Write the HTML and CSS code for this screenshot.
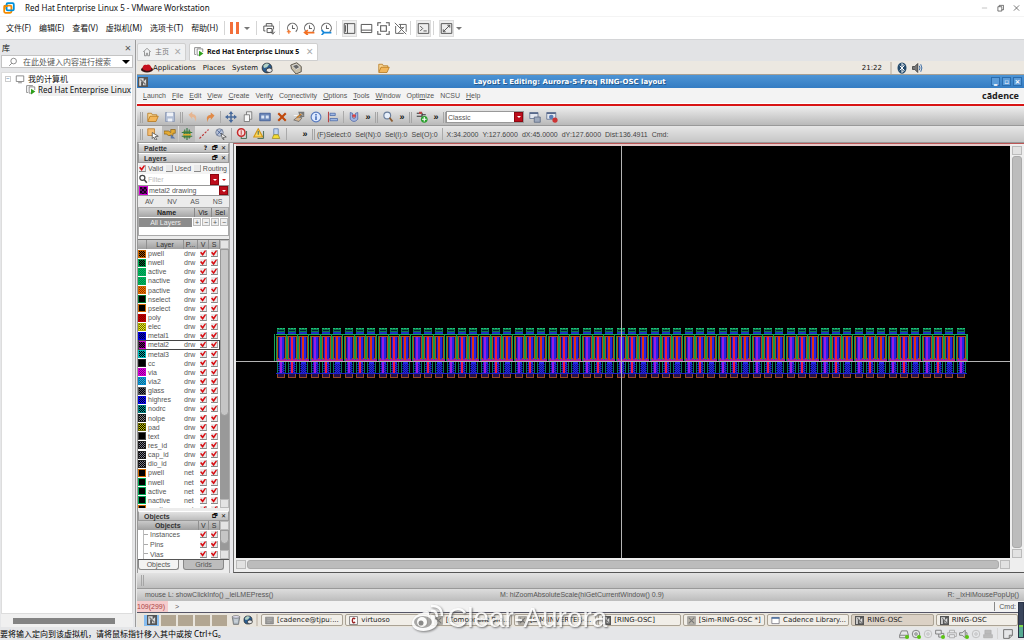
FILE: index.html
```html
<!DOCTYPE html>
<html lang="zh-CN">
<head>
<meta charset="utf-8">
<title>Red Hat Enterprise Linux 5 - VMware Workstation</title>
<link rel="stylesheet" href="styles.css">
</head>
<body>
<svg class="sprite" aria-hidden="true">
  <symbol id="i-home" viewBox="0 0 16 16"><path d="M2 8l6-6 6 6M4 7v7h3v-4h2v4h3V7" fill="none" stroke="#777" stroke-width="1.2"/></symbol>
  <symbol id="i-vm" viewBox="0 0 16 16"><path d="M10 13H5V3h9v5M3 12H1V1h10" fill="none" stroke="#777" stroke-width="1.3"/><path d="M8 6l7 4.500-7 4.500z" fill="#2fa01c"/></symbol>
  <symbol id="i-pc" viewBox="0 0 16 16"><path d="M2 3h12v9H2zM5 14h6" fill="none" stroke="#777" stroke-width="1.300"/></symbol>
  <symbol id="i-search" viewBox="0 0 16 16"><circle cx="9" cy="6.500" r="4.500" fill="none" stroke="#777" stroke-width="1.300"/><path d="M6 10l-4 4" stroke="#777" stroke-width="1.400"/></symbol>
  <symbol id="i-send" viewBox="0 0 16 16"><path d="M4 5V2h7v3M3 11H1V5h12v4M5 8h6v5H5zM12 9v5M9.500 12l2.500 3 2.500-3" fill="none" stroke="#555" stroke-width="1.200"/></symbol>
  <symbol id="i-clock" viewBox="0 0 16 16"><path d="M3 11a6 6 0 1 1 9 1M8 4v4h3" fill="none" stroke="#666" stroke-width="1.300"/></symbol>
  <symbol id="i-panel" viewBox="0 0 16 16"><path d="M1.500 2h13v12h-13zM5.500 2v12M3 4v8" fill="none" stroke="#555" stroke-width="1.200"/></symbol>
  <symbol id="i-bottom" viewBox="0 0 16 16"><path d="M1.500 3h13v10h-13zM1.500 10h13" fill="none" stroke="#555" stroke-width="1.200"/></symbol>
  <symbol id="i-full" viewBox="0 0 16 16"><path d="M1 5V1h4M11 1h4v4M15 11v4h-4M5 15H1v-4M4.500 4.500h7v7h-7z" fill="none" stroke="#555" stroke-width="1.300"/></symbol>
  <symbol id="i-unity" viewBox="0 0 16 16"><path d="M6 3h9v9M12 14H2V5M5 14l7-8M1 1l14 14M8 3v4h4" fill="none" stroke="#666" stroke-width="1.200"/></symbol>
  <symbol id="i-console" viewBox="0 0 16 16"><path d="M1.500 2h13v12h-13zM4 5l3 3-3 3M8 11h4" fill="none" stroke="#555" stroke-width="1.200"/></symbol>
  <symbol id="i-expand" viewBox="0 0 16 16"><path d="M1.500 2h13v12h-13zM4 12l8-8M9 4h3v3M4 9v3h3" fill="none" stroke="#555" stroke-width="1.200"/></symbol>
  <symbol id="i-hat" viewBox="0 0 16 16"><ellipse cx="8" cy="10" rx="8" ry="4" fill="#3b1414"/><path d="M2 9c0-5 3-6 5-5 3-2 7 0 7 6-4 3-9 2-12-1z" fill="#c6101c"/></symbol>
  <symbol id="i-globe" viewBox="0 0 16 16"><circle cx="8" cy="8" r="6.500" fill="#2b5d8f" stroke="#222"/><path d="M3 5c3-4 6-3 8-2l-3 4-4 1z" fill="#b4d3c6"/><ellipse cx="11" cy="11" rx="4" ry="3" fill="#e8e8e8" stroke="#222"/></symbol>
  <symbol id="i-mail" viewBox="0 0 16 16"><path d="M1 4l8-3 6 5v7l-7 3-6-7z" fill="#c9c0aa" stroke="#38342c"/><path d="M3 5l6-2 4 4-5 3z" fill="#666" stroke="#eee"/></symbol>
  <symbol id="i-folder" viewBox="0 0 16 16"><path d="M1 13V3h5l1 2h6v3" fill="#f7d492" stroke="#b37418"/><path d="M1 14l3-7h11l-3 7z" fill="#f3b65a" stroke="#b37418"/></symbol>
  <symbol id="i-bt" viewBox="0 0 16 16"><ellipse cx="8" cy="8" rx="6" ry="7.500" fill="#234a6c"/><path d="M5 5l6 6-3 3V2l3 3-6 6" fill="none" stroke="#fff" stroke-width="1.300"/></symbol>
  <symbol id="i-sound" viewBox="0 0 16 16"><path d="M2 6h3l4-4v12l-4-4H2z" fill="#777" stroke="#333"/><path d="M11 5q2 3 0 6M13 3q3 5 0 10" fill="none" stroke="#386aa5" stroke-width="1.300"/></symbol>
  <symbol id="i-app" viewBox="0 0 16 16"><path fill="#555" d="M0 0h16v16H0z"/><path d="M2 2h7v5H5v7H2zM8 13V8l5-5v10z" fill="#ddd"/><path d="M4 4l8 8" stroke="#777" stroke-width="2"/></symbol>
  <symbol id="i-save" viewBox="0 0 16 16"><path d="M2 2h12v12H2z" fill="#b1bdd4" stroke="#8794b0"/><path d="M4 2h8v5H4zM5 10h6v4H5z" fill="#eef1f7"/></symbol>
  <symbol id="i-undo" viewBox="0 0 16 16"><path d="M2 5l5-4v3q8 1 4 10 0-6-4-6v3z" fill="#e6b692"/></symbol>
  <symbol id="i-redo" viewBox="0 0 16 16"><path d="M14 6L9 2v3q-8 1-4 10 0-6 4-6v3z" fill="#e08a48"/></symbol>
  <symbol id="i-move" viewBox="0 0 16 16"><path d="M8 0l3 4H9v3h3V5l4 3-4 3V9H9v3h2l-3 4-3-4h2V9H4v2L0 8l4-3v2h3V4H5z" fill="#47699b"/></symbol>
  <symbol id="i-copy" viewBox="0 0 16 16"><path d="M6 1h7v10H6z" fill="#eee" stroke="#666"/><path d="M3 5h7v9H3z" fill="#f8f8f8" stroke="#666"/></symbol>
  <symbol id="i-stretch" viewBox="0 0 16 16"><path d="M1 3h14v10H1z" fill="#6c87b8" stroke="#365490"/><path d="M3 6h4v4H3zM9 6h4v4H9z" fill="#dbe5f5"/></symbol>
  <symbol id="i-del" viewBox="0 0 16 16"><path d="M2 4l2-2 4 4 4-4 2 2-4 4 4 4-2 2-4-4-4 4-2-2 4-4z" fill="#c0480b"/></symbol>
  <symbol id="i-prop" viewBox="0 0 16 16"><path d="M1 12l5-4 6 1-4 5z" fill="#d8b691" stroke="#666"/><path d="M7 1h8v7H9z" fill="#777"/><path d="M10 3l3 3M1 6h5" stroke="#fff"/><path d="M5 9l6-5" stroke="#c87b24" stroke-width="2"/></symbol>
  <symbol id="i-info" viewBox="0 0 16 16"><circle cx="8" cy="8" r="6.500" fill="#dce8ff" stroke="#5679bd" stroke-width="1.500"/><path d="M8 7v5M8 4v2" stroke="#3e67b5" stroke-width="2"/></symbol>
  <symbol id="i-align" viewBox="0 0 16 16"><path d="M2 1v14" stroke="#b44" stroke-width="1.500"/><path d="M4 3h7v3H4zM4 10h10v3H4z" fill="#9fb7e3" stroke="#496aa8"/></symbol>
  <symbol id="i-magnet" viewBox="0 0 16 16"><path d="M3 2l3 1v6q2 2 4 0V3l3-1v9q-5 6-10 0z" fill="#a3b4df" stroke="#4c65a7"/><path d="M8 4v5M5.500 6.500h5" stroke="#d33" stroke-width="1.500"/></symbol>
  <symbol id="i-zoom" viewBox="0 0 16 16"><circle cx="7" cy="6" r="4.500" fill="#e8f0fb" stroke="#6a7f9d" stroke-width="1.500"/><path d="M10 9l4 5" stroke="#8c5c30" stroke-width="2.500"/></symbol>
  <symbol id="i-net" viewBox="0 0 16 16"><path d="M1 3h7v4H1M8 5h5" fill="none" stroke="#333" stroke-width="1.500"/><path d="M4 1h4v3H4z" fill="#b44"/><circle cx="11" cy="11" r="4.500" fill="#2aa02d"/><path d="M11 8v6M8 11h6" stroke="#fff" stroke-width="1.500"/></symbol>
  <symbol id="i-win" viewBox="0 0 16 16"><path d="M1 2h11v8H1z" fill="#e3e7ef" stroke="#58698b"/><path d="M1 3h11" stroke="#58698b" stroke-width="2"/><path d="M7 8h8v7H7z" fill="#9da9bd" stroke="#56647e"/></symbol>
  <symbol id="i-winred" viewBox="0 0 16 16"><path d="M1 2h12v9H1z" fill="#e3e7ef" stroke="#58698b"/><path d="M1 3h12" stroke="#58698b" stroke-width="2"/><circle cx="7" cy="8" r="3" fill="#5b7db5"/><circle cx="12" cy="12" r="3.500" fill="#c33"/></symbol>
  <symbol id="i-pick" viewBox="0 0 16 16"><path d="M1 1h9v9H1z" fill="#f4bd72" stroke="#bb7928"/><path d="M7 6l8 5-4 .5 2 4-2 .5-2-4-2 2z" fill="#fff" stroke="#444"/></symbol>
  <symbol id="i-hand" viewBox="0 0 16 16"><path d="M0 4h6l3 2V2h6v5h-3v3H6L3 8H0z" fill="#e4ab35" stroke="#8a641f"/><path d="M9 8l6 6H9z" fill="#5d78a8"/></symbol>
  <symbol id="i-cross" viewBox="0 0 16 16"><path d="M3 4h10v9H3z" fill="#89a449"/><path d="M1 6h14M1 11h14M8 0v16M5 2v12M11 2v12" stroke="#397a49" stroke-width="1.600"/><path d="M3 9h10" stroke="#e2ae2f" stroke-width="2"/></symbol>
  <symbol id="i-line" viewBox="0 0 16 16"><path d="M2 14L14 2" stroke="#b33" stroke-width="1.500" stroke-dasharray="3 2"/></symbol>
  <symbol id="i-poly" viewBox="0 0 16 16"><circle cx="6" cy="6" r="5" fill="#b7c2d8" stroke="#67738b"/><path d="M3 3l7 7M9 2L3 9" stroke="#3c568b"/><path d="M8 7l7 5-4 .5 1 3-2-1z" fill="#fff" stroke="#444"/></symbol>
  <symbol id="i-stop" viewBox="0 0 16 16"><circle cx="7" cy="6" r="5" fill="#f6dada" stroke="#c52929" stroke-width="2"/><path d="M7 3v6" stroke="#c55" stroke-width="1.500"/><path d="M7 12v2h7M14 4v10" fill="none" stroke="#54745e" stroke-width="1.500"/></symbol>
  <symbol id="i-warn" viewBox="0 0 16 16"><path d="M7 1l6 11H1z" fill="#fbd759" stroke="#d19516" stroke-width="1.500"/><path d="M7 4v5M6 14h8M14 4v10" fill="none" stroke="#54745e" stroke-width="1.500"/></symbol>
  <symbol id="i-lamp" viewBox="0 0 16 16"><path d="M5 1h6v8H5z" fill="#c1d3ed" stroke="#5678ac"/><path d="M5 9h6l2 5H3z" fill="#f4dc34" stroke="#9c8c27"/></symbol>
  <symbol id="i-term" viewBox="0 0 16 16"><path d="M1 2h14v12H1z" fill="#999" stroke="#777"/><path d="M4 5h8M4 8h8M4 11h5" stroke="#bbb"/></symbol>
  <symbol id="i-wnd" viewBox="0 0 16 16"><path d="M1.500 2.500h13v11h-13z" fill="#fff" stroke="#445"/><path d="M1 3.500h14" stroke="#456a9d" stroke-width="3"/></symbol>
  <symbol id="i-c" viewBox="0 0 16 16"><path d="M1 1h14v14H1z" fill="#fff" stroke="#333"/><path d="M11 5q-5-3-5 3t5 3" fill="none" stroke="#922" stroke-width="2.500"/></symbol>
  <symbol id="i-x" viewBox="0 0 16 16"><path d="M1 1h14v14H1z" fill="#b9b4aa" stroke="#888"/><path d="M3 3l10 10M13 3L3 13" stroke="#777" stroke-width="2"/></symbol>
  <symbol id="i-trash" viewBox="0 0 16 16"><path d="M2 3h12l-2 12H4z" fill="#aab6c0" stroke="#555"/><ellipse cx="8" cy="3" rx="6" ry="2" fill="#eef" stroke="#555"/><path d="M5 8h6M5 11h6" stroke="#fff"/></symbol>
  <symbol id="i-disk" viewBox="0 0 16 16"><path d="M1 10l3-7h9l2 7v4H1zM1 10h14" fill="none" stroke="#777" stroke-width="1.400"/></symbol>
  <symbol id="i-cd" viewBox="0 0 16 16"><circle cx="8" cy="8" r="6" fill="none" stroke="currentColor" stroke-width="1.400"/><circle cx="8" cy="8" r="2" fill="none" stroke="currentColor" stroke-width="1.400"/></symbol>
  <symbol id="i-lan" viewBox="0 0 16 16"><path d="M1 2h9v6H1zM6 8v5h8V7h-4" fill="none" stroke="#777" stroke-width="1.400"/></symbol>
  <symbol id="i-print" viewBox="0 0 16 16"><path d="M4 6V2h8v4M4 12H1V6h14v6h-3M4 9h8v5H4z" fill="none" stroke="#aaa" stroke-width="1.400"/></symbol>
  <symbol id="i-spk" viewBox="0 0 16 16"><path d="M1 6h4l5-4v12l-5-4H1zM12 5q2 3 0 6" fill="none" stroke="#777" stroke-width="1.400"/></symbol>
  <symbol id="i-ser" viewBox="0 0 16 16"><path d="M3 2h10v6H3zM1 9h14v5H1z" fill="#bbb" stroke="#aaa"/></symbol>
  <symbol id="i-note" viewBox="0 0 16 16"><path d="M1 1h14v9l-5 5H1zM15 10h-5v5" fill="none" stroke="#666" stroke-width="1.400"/></symbol>
</svg>

<div class="host">
  <header class="titlebar">
    <svg class="logo" viewBox="0 0 20 20"><rect x="2" y="6" width="12" height="12" rx="2" fill="none" stroke="#f38b00" stroke-width="3"/><rect x="6" y="2" width="12" height="12" rx="2" fill="none" stroke="#0091da" stroke-width="3"/><path d="M3 12V7h5" fill="none" stroke="#f38b00" stroke-width="3"/></svg>
    <span class="grow">Red Hat Enterprise Linux 5 - VMware Workstation</span>
    <button class="winbtn dim" aria-label="最小化"><svg viewBox="0 0 8 8"><path d="M1 4h6" stroke="#bbb"/></svg></button>
    <button class="winbtn" aria-label="还原"><svg viewBox="0 0 8 8"><path d="M1 2.500h4.500v5H1zM2.500 2.500V1h5v5H5.500" fill="none" stroke="#444" stroke-width=".8"/></svg></button>
    <button class="winbtn" aria-label="关闭"><svg viewBox="0 0 8 8"><path d="M1 1l6 6M7 1L1 7" stroke="#444" stroke-width=".8"/></svg></button>
  </header>
  <nav class="hostmenu">
    <button>文件(F)</button><button>编辑(E)</button><button>查看(V)</button><button>虚拟机(M)</button><button>选项卡(T)</button><button>帮助(H)</button>
    <i class="vsep"></i>
    <button class="pause" aria-label="暂停"><i></i><i></i></button><span class="caret"></span>
    <i class="vsep"></i>
    <button class="tool" aria-label="发送"><svg><use href="#i-send"/></svg></button>
    <i class="vsep"></i>
    <button class="tool" aria-label="快照"><svg viewBox="0 0 16 16"><use href="#i-clock"/><path d="M1 12h5M3.500 9.500v5" stroke="#f36f21" stroke-width="1.500"/></svg></button>
    <button class="tool" aria-label="恢复"><svg viewBox="0 0 16 16"><use href="#i-clock"/><path d="M14 13H3M6 10l-4 3 4 3" stroke="#f36f21" stroke-width="2" fill="none"/></svg></button>
    <button class="tool" aria-label="管理"><svg viewBox="0 0 16 16"><use href="#i-clock"/><path d="M14 13H3M2 10l3 3-3 3" stroke="#1687d9" stroke-width="2" fill="none"/></svg></button>
    <i class="vsep"></i>
    <button class="tool on" aria-label="库"><svg><use href="#i-panel"/></svg></button>
    <button class="tool" aria-label="缩略图"><svg><use href="#i-bottom"/></svg></button>
    <button class="tool" aria-label="全屏"><svg><use href="#i-full"/></svg></button>
    <button class="tool" aria-label="Unity"><svg><use href="#i-unity"/></svg></button>
    <i class="vsep"></i>
    <button class="tool on" aria-label="控制台"><svg><use href="#i-console"/></svg></button>
    <i class="vsep"></i>
    <button class="tool on" aria-label="拉伸"><svg><use href="#i-expand"/></svg></button><span class="caret last"></span>
  </nav>

  <div class="body">
    <aside class="library">
      <div class="libhead"><span class="grow">库</span><button class="close" aria-label="关闭库">×</button></div>
      <div class="libsearch"><svg class="s10"><use href="#i-search"/></svg><input aria-label="搜索" placeholder="在此处键入内容进行搜索"><span class="bigcaret"></span></div>
      <div class="tree">
        <div class="node"><span class="minus">−</span><svg class="s10"><use href="#i-pc"/></svg>我的计算机</div>
        <div class="node child"><svg class="s10"><use href="#i-vm"/></svg><span>Red Hat Enterprise Linux</span></div>
      </div>
      <div class="libscroll"><i></i></div>
    </aside>

    <main class="vm">
      <div class="tabs">
        <button class="tab"><svg class="s10"><use href="#i-home"/></svg><span>主页</span><b>×</b></button>
        <button class="tab active"><svg class="s10"><use href="#i-vm"/></svg><strong>Red Hat Enterprise Linux 5</strong><b>×</b></button>
      </div>
      <div class="gnome">
        <svg class="s12"><use href="#i-hat"/></svg>
        <button>Applications</button><button>Places</button><button>System</button>
        <svg class="s12"><use href="#i-globe"/></svg>
        <svg class="s12 mail"><use href="#i-mail"/></svg>
        <svg class="s12 fold"><use href="#i-folder"/></svg>
        <span class="grow"></span>
        <span class="time">21:22</span><i class="gsep"></i>
        <svg class="s12"><use href="#i-bt"/></svg><svg class="s12"><use href="#i-sound"/></svg>
      </div>
      <div class="cadtitle">
        <svg class="s10"><use href="#i-app"/></svg>
        <span class="grow">Layout L Editing: Aurora-5-Freq RING-OSC layout</span>
        <button aria-label="Minimize">‗</button><button aria-label="Maximize">▫</button><button aria-label="Close">×</button>
      </div>
      <nav class="cadmenu">
        <button><u>L</u>aunch</button><button><u>F</u>ile</button><button><u>E</u>dit</button><button><u>V</u>iew</button><button><u>C</u>reate</button><button>Verif<u>y</u></button><button>Co<u>n</u>nectivity</button><button><u>O</u>ptions</button><button><u>T</u>ools</button><button><u>W</u>indow</button><button>Opti<u>m</u>ize</button><button>NCSU</button><button><u>H</u>elp</button>
        <span class="brand">cādence</span>
      </nav>
      <div class="bar bar1">
        <i class="grip"></i>
        <button class="ic" aria-label="Open"><svg><use href="#i-folder"/></svg></button>
        <button class="ic" aria-label="Save"><svg><use href="#i-save"/></svg></button>
        <i class="grip"></i>
        <button class="ic" aria-label="Undo"><svg><use href="#i-undo"/></svg></button>
        <button class="ic" aria-label="Redo"><svg><use href="#i-redo"/></svg></button>
        <i class="thin"></i>
        <button class="ic" aria-label="Move"><svg><use href="#i-move"/></svg></button>
        <button class="ic" aria-label="Copy"><svg><use href="#i-copy"/></svg></button>
        <button class="ic" aria-label="Stretch"><svg><use href="#i-stretch"/></svg></button>
        <button class="ic" aria-label="Delete"><svg><use href="#i-del"/></svg></button>
        <button class="ic" aria-label="Properties"><svg><use href="#i-prop"/></svg></button>
        <button class="ic" aria-label="Info"><svg><use href="#i-info"/></svg></button>
        <button class="ic" aria-label="Align"><svg><use href="#i-align"/></svg></button>
        <i class="thin"></i>
        <button class="ic" aria-label="Snap"><svg><use href="#i-magnet"/></svg></button>
        <span class="more">»</span><i class="grip"></i>
        <button class="ic" aria-label="Zoom"><svg><use href="#i-zoom"/></svg></button>
        <span class="more">»</span><i class="grip"></i>
        <button class="ic" aria-label="Nets"><svg><use href="#i-net"/></svg></button>
        <span class="more">»</span><i class="grip"></i>
        <label class="combo classic"><select aria-label="Workspace"><option>Classic</option></select><i class="red"></i></label>
        <button class="ic" aria-label="Save workspace"><svg><use href="#i-win"/></svg></button>
        <button class="ic" aria-label="Delete workspace"><svg><use href="#i-winred"/></svg></button>
      </div>
      <div class="bar bar2">
        <i class="grip"></i>
        <button class="ic" aria-label="Select"><svg><use href="#i-pick"/></svg></button>
        <button class="ic on" aria-label="Partial"><svg><use href="#i-hand"/></svg></button>
        <button class="ic on" aria-label="Grid"><svg><use href="#i-cross"/></svg></button>
        <button class="ic" aria-label="Line"><svg><use href="#i-line"/></svg></button>
        <button class="ic" aria-label="Area"><svg><use href="#i-poly"/></svg></button>
        <i class="thin"></i>
        <button class="ic" aria-label="Stop"><svg><use href="#i-stop"/></svg></button>
        <button class="ic" aria-label="Warn"><svg><use href="#i-warn"/></svg></button>
        <button class="ic" aria-label="Highlight"><svg><use href="#i-lamp"/></svg></button>
        <i class="thin"></i>
        <span class="more far">»</span><i class="grip"></i>
        <div class="sel"><span>(F)Select:0</span><span>Sel(N):0</span><span>Sel(I):0</span><span>Sel(O):0</span></div>
        <i class="thin"></i>
        <div class="coords"><span>X:34.2000</span><span>Y:127.6000</span><span>dX:45.0000</span><span>dY:127.6000</span><span>Dist:136.4911</span><span>Cmd:</span></div>
      </div>

      <div class="work">
        <section class="dock">
          <div class="dtitle"><span class="grow">Palette</span><b>?</b><b>🗗︎</b><b>✕</b></div>
          <div class="dtitle"><span class="grow">Layers</span><b>🗗︎</b><b>✕</b></div>
          <div class="valid"><label><input class="ck" type="checkbox" checked>Valid</label><label><input class="ck" type="checkbox">Used</label><label><input class="ck" type="checkbox">Routing</label></div>
          <div class="filter"><svg class="s10" viewBox="0 0 16 16"><circle cx="7" cy="6" r="4" fill="none" stroke="#444" stroke-width="2"/><path d="M10 9l4 5" stroke="#444" stroke-width="2.500"/></svg><input aria-label="Filter" placeholder="Filter"><i class="red"></i><i class="redcaret"></i></div>
          <label class="combo cur"><i class="sw"></i><select aria-label="Current layer"><option>metal2 drawing</option></select><i class="red"></i></label>
          <div class="avnv"><button>AV</button><button>NV</button><button>AS</button><button>NS</button></div>
          <div class="names">
            <div class="thead"><b class="grow">Name</b><span>Vis</span><span>Sel</span></div>
            <div class="all"><span class="grow">All Layers</span><button>+</button><button>−</button><button>+</button><button>−</button></div>
          </div>
          <div class="list">
            <table class="layers">
              <thead><tr><th></th><th>Layer</th><th>P...</th><th>V</th><th>S</th></tr></thead>
              <tbody id="layers"></tbody>
            </table>
            <div class="vbar"><i class="up"></i><i class="thumb"></i><i class="track"></i><i class="down"></i></div>
          </div>
          <div class="dtitle"><span class="grow">Objects</span><b>🗗︎</b><b>✕</b></div>
          <div class="objs">
            <table>
              <thead><tr><th>Objects</th><th>V</th><th>S</th></tr></thead>
              <tbody>
                <tr><td>Instances</td><td><input class="ck" type="checkbox" checked aria-label="Instances visible"></td><td><input class="ck" type="checkbox" checked aria-label="Instances selectable"></td></tr>
                <tr><td>Pins</td><td><input class="ck" type="checkbox" checked aria-label="Pins visible"></td><td><input class="ck" type="checkbox" checked aria-label="Pins selectable"></td></tr>
                <tr><td>Vias</td><td><input class="ck" type="checkbox" checked aria-label="Vias visible"></td><td><input class="ck" type="checkbox" checked aria-label="Vias selectable"></td></tr>
              </tbody>
            </table>
            <div class="vbar"><i class="up"></i><i class="thumb"></i><i class="track"></i><i class="down"></i></div>
          </div>
          <div class="dtabs"><button class="cur">Objects</button><button>Grids</button></div>
        </section>

        <section class="view">
          <svg class="canvas" viewBox="0 0 774 412" preserveAspectRatio="xMidYMid slice" shape-rendering="crispEdges">
            <defs>
              <pattern id="dots" width="2" height="2" patternUnits="userSpaceOnUse"><path d="M0 0h1v1H0zM1 1h1v1H1z" fill="#15158c"/></pattern>
              <g id="cell">
                <path d="M1 182h8v4H1z" fill="#0b7a4a"/><path d="M1 182.500h8" stroke="#1cc47c" stroke-dasharray="2 1"/>
                <path d="M2 184h6v1H2z" fill="#001a30"/>
                <path d="M1 186h8v3H1z" fill="#1a2fc0"/>
                <path d="M0 188.500h12" stroke="#10a85c"/>
                <path d="M.5 190v25M10.500 188v27" stroke="#10984c"/>
                <path d="M1.500 190.500h8v22h-8z" fill="#150a6e" stroke="#b0500f"/>
                <path d="M3 191h5v36H3z" fill="#2424e6"/>
                <path d="M1 213h10v3H1z" fill="#8e1ca8"/>
                <path d="M1 218h9v9H1z" fill="url(#dots)"/>
                <path d="M1.500 216v11M9.500 216v11" stroke="#0b7a5a"/>
                <path d="M0 227.500h12" stroke="#2020d0"/>
                <path d="M1.500 228v3h7v-3" fill="#26104a" stroke="#994a28"/>
              </g>
              <pattern id="ring" width="34" height="412" x="40" patternUnits="userSpaceOnUse">
                <use href="#cell"/><use href="#cell" x="11"/><use href="#cell" x="22"/>
                <path d="M5 191v36" stroke="#9a1ae0" stroke-width="2"/><path d="M16 191v36" stroke="#f01848" stroke-width="2"/><path d="M27 190v24" stroke="#e03018" stroke-width="2"/><path d="M2 214h31" stroke="#c02090"/>
              </pattern>
            </defs>
            <rect width="774" height="412" fill="#000"/>
            <rect x="40" y="180" width="691" height="54" fill="url(#ring)"/>
            <path d="M38.500 188v27M731.500 188v27" stroke="#10a85c"/>
            <path d="M385.500 0v412M0 215.500h774" stroke="#b4b4b4" fill="none"/>
          </svg>
          <div class="vscroll"><i class="end"></i><i class="bar-thumb"></i><i class="end"></i></div>
          <div class="hscroll"><i class="end"></i><i class="bar-thumb"></i><i class="end"></i></div>
        </section>
      </div>

      <div class="strip"><i class="grip"></i></div>
      <div class="mouse"><span>mouse L: showClickInfo() _leiLMEPress()</span><span>M: hiZoomAbsoluteScale(hiGetCurrentWindow() 0.9)</span><span>R: _lxHiMousePopUp()</span></div>
      <div class="cmd"><span class="pink">109(299)</span><span class="grow">&gt;</span><span class="cmdr">Cmd:</span></div>
      <div class="tasks">
        <div class="pager"><i class="now"><svg class="s10"><use href="#i-app"/></svg></i><i></i><i></i><i></i><i></i></div>
        <svg class="s10"><use href="#i-trash"/></svg><svg class="s10"><use href="#i-globe"/></svg><i class="gsep"></i>
        <div class="tasklist">
          <button><svg><use href="#i-term"/></svg>[cadence@tjpu:...</button>
          <button><svg><use href="#i-c"/></svg>virtuoso</button>
          <button><svg><use href="#i-x"/></svg>[Component Bro...</button>
          <button><svg><use href="#i-x"/></svg>[SIM-INVERTER-...</button>
          <button><svg><use href="#i-app"/></svg>[RING-OSC]</button>
          <button><svg><use href="#i-x"/></svg>[Sim-RING-OSC *]</button>
          <button><svg><use href="#i-wnd"/></svg>Cadence Library...</button>
          <button class="down"><svg><use href="#i-app"/></svg>RING-OSC</button>
          <button><svg><use href="#i-app"/></svg>RING-OSC</button>
        </div>
      </div>
    </main>
  </div>

  <footer class="status">
    <span class="grow">要将输入定向到该虚拟机，请将鼠标指针移入其中或按 Ctrl+G。</span>
    <span class="dev live"><svg><use href="#i-disk"/></svg></span>
    <span class="dev live"><svg><use href="#i-cd"/></svg></span>
    <span class="dev off"><svg><use href="#i-cd"/></svg></span>
    <span class="dev live"><svg><use href="#i-lan"/></svg></span>
    <span class="dev"><svg><use href="#i-print"/></svg></span>
    <span class="dev live"><svg><use href="#i-spk"/></svg></span>
    <span class="dev off"><svg><use href="#i-cd"/></svg></span>
    <span class="dev"><svg><use href="#i-ser"/></svg></span>
    <i class="vsep"></i>
    <span class="dev"><svg><use href="#i-note"/></svg></span>
  </footer>
</div>
<div class="gauge"><i></i></div>
<div class="mark">
  <svg viewBox="0 0 34 28"><path d="M13 9c4-3 8-3 7 2 5-1 7 1 6 4 4 2 3 6-1 9-6 4-17 4-21-1-4-6 3-13 9-14z" fill="#fff"/><ellipse cx="14" cy="18" rx="9" ry="6" fill="#9b9b9b"/><circle cx="13" cy="18" r="5" fill="#fff"/><circle cx="12" cy="19" r="2.500" fill="#777"/><path d="M22 7q6-1 6 6M22 2q11-1 11 10" fill="none" stroke="#fff" stroke-width="2.500"/></svg>
  <span>Clear-Aurora</span>
</div>
<script src="layers.js"></script>
</body>
</html>
```

FILE: styles.css
```css
* { box-sizing: border-box; }
body { margin: 0; font: 8px/12px "Noto Sans", "Noto Sans CJK SC", sans-serif; color: #111; background: #e6e7e9; }
button, input, select { font: inherit; color: inherit; border: 0; background: none; padding: 0; margin: 0; min-width: 0; }
button { white-space: nowrap; }
i { display: block; font-style: normal; }
svg { display: block; flex: none; }
.sprite { position: absolute; width: 0; height: 0; }
.grow { flex: 1; min-width: 0; }
.s10 { width: 10px; height: 10px; }
.s12 { width: 12px; height: 12px; }

.host { display: flex; flex-direction: column; height: 100vh; overflow: hidden; }
.titlebar { display: flex; align-items: center; height: 16px; padding: 0 5px 0 3px; background: #fff; gap: 10px; }
.logo { width: 12px; height: 12px; }
.winbtn { width: 6px; height: 8px; }
.winbtn svg { width: 7px; height: 8px; }
.hostmenu { display: flex; align-items: center; height: 24px; padding: 0 6px; gap: 8px; background: #fff; border-bottom: 1px solid #d4d5d7; border-top: 1px solid #f4f4f4; }
.hostmenu > .vsep { margin: 0 -3px 0 -2px; }
.vsep { width: 1px; height: 14px; background: #d5d5d5; }
.pause { display: flex; gap: 3px; }
.pause i { width: 3px; height: 12px; background: #f36f3a; }
.caret { border: 3px solid transparent; border-top-color: #777; border-bottom: 0; }
.hostmenu .caret { margin-left: -3px; }
.hostmenu .caret.last { margin-left: 0; }
.tool { width: 15px; height: 17px; padding: 1px; margin-right: -6px; }
.tool svg { width: 13px; height: 13px; }
.tool.on { background: #eee; outline: 1px solid #ddd; outline-offset: -1px; }
.hostmenu .tool + .vsep { margin-left: 0; }

.body { display: flex; flex: 1; min-height: 0; }
.library { display: flex; flex-direction: column; width: 136px; background: #e6e7e9; padding: 1px 2px 0 1px; border-right: 1px solid #9b9b9b; }
.libhead { display: flex; align-items: center; height: 14px; padding: 0 2px 0 1px; }
.close { font-size: 11px; color: #555; }
.libsearch { display: flex; align-items: center; height: 13px; gap: 5px; padding: 0 2px 0 6px; background: #fff; border: 1px solid #c4c4c4; }
.libsearch input { flex: 1; height: 10px; }
.libsearch input::placeholder { color: #555; }
.bigcaret { border: 4px solid transparent; border-top-color: #000; border-bottom: 0; }
.tree { flex: 1; background: #fff; margin-top: 4px; border: 1px solid #ddd; overflow: hidden; }
.node { display: flex; align-items: center; gap: 3px; height: 11px; padding-left: 3px; white-space: nowrap; }
.minus { width: 6px; height: 6px; line-height: 4px; font-size: 6px; border: 1px solid #ccc; color: #369; margin-right: 1px; }
.child { padding-left: 24px; gap: 2px; }
.child span { background: #eee; }
.libscroll { height: 13px; padding: 4px 18px 2px 12px; background: #f0f0f0; }
.libscroll i { height: 6px; background: #838383; }

.vm { display: flex; flex-direction: column; flex: 1; min-width: 0; padding-left: 1px; background: #e8e8e8; font: 7px/9px "Liberation Sans", sans-serif; }
.tabs { display: flex; height: 21px; padding-top: 3px; gap: 3px; background: #e2e3e5; font: 7px/12px "Noto Sans", "Noto Sans CJK SC", sans-serif; }
.tab { display: flex; align-items: center; gap: 3px; width: 49px; padding: 0 4px; background: #f0f1f2; border: 1px solid #cfcfcf; border-radius: 2px 2px 0 0; color: #777; }
.tab b { margin-left: auto; font-weight: 400; font-size: 12px; color: #aaa; }
.tab.active { width: 129px; background: #fff; color: #111; }
.gnome { display: flex; align-items: center; height: 14px; padding: 0 101px 0 4px; gap: 7px; background: #ece8e1; font: 7px/10px "DejaVu Sans", sans-serif; border-bottom: 1px solid #a79f92; }
.gnome > svg:first-child { margin-right: -7px; }
.gnome > svg + svg.mail { margin-left: 10px; }
.gnome .fold { margin-left: 69px; }
.gnome button + svg { margin-left: -4px; }
.gnome .time { margin-right: 4px; }
.gsep { width: 2px; height: 12px; background: #d0c8bd; margin: 0 -3px; }
.gnome svg:last-child { margin-left: -4px; }
.gnome .time { margin-left: auto; }
.cadtitle { display: flex; align-items: center; height: 13px; gap: 2px; padding: 0 2px 0 1px; background: linear-gradient(#4d94d5, #347cc2); color: #fff; font: bold 7px/10px "DejaVu Sans", sans-serif; text-align: center; text-shadow: 1px 1px 0 #285a8c; }
.cadtitle button { width: 9px; height: 9px; background: #5b9bd8; border: 1px solid #2b6cad; font-size: 7px; line-height: 6px; }
.cadmenu { display: flex; align-items: center; height: 16px; gap: 6px; padding: 0 5px 0 6px; background: #f3f3f3; border-bottom: 1px solid #fff; color: #555; }
.cadmenu u { text-underline-offset: 1px; }
.brand { margin-left: auto; font: bold 9px/12px "Noto Sans", sans-serif; color: #222; }
.bar { display: flex; align-items: center; gap: 5px; padding: 0 4px; background: linear-gradient(#eee, #b9b9b9); border-bottom: 1px solid #999; }
.bar1 { height: 22px; padding-top: 3px; border-top: 2px solid #d81414; }
.bar2 { height: 17px; background: linear-gradient(#e6e6e6, #c6c6c6); }
.ic { width: 12px; height: 12px; flex: none; }
.ic svg { width: 12px; height: 12px; }
.ic.on { background: #bcbcbc; box-shadow: 0 0 0 2px #bcbcbc; }
.grip { width: 3px; height: 11px; margin: 0 -1px; border-left: 1px solid #a5a5a5; border-right: 1px solid #a5a5a5; flex: none; }
.thin { width: 1px; height: 12px; background: #aaa; margin: 0 -1px; flex: none; }
.more { font-weight: bold; font-size: 9px; color: #111; width: 6px; text-align: center; }
.more.far { margin-left: 11px; }
.red { width: 9px; background: #bd0d1b; display: flex; align-items: center; justify-content: center; border: 1px solid #8d0710; flex: none; }
.red::after, .redcaret::after { content: ""; border: 2px solid transparent; border-top-color: #fff; border-bottom: 0; }
.redcaret { display: flex; align-items: center; justify-content: center; width: 10px; }
.redcaret::after { border-top-color: #c11; }
.combo { display: flex; background: #fff; border: 1px solid #999; }
.combo select { flex: 1; appearance: none; padding-left: 1px; }
.classic { width: 78px; height: 12px; color: #555; margin-left: -4px; }
.sel, .coords { display: flex; color: #444; gap: 4px; }
.sel { margin-left: -2px; }

.work { display: flex; flex: 1; min-height: 0; background: #e9e9ec; }
.dock { display: flex; flex-direction: column; width: 93px; background: #ececec; color: #555; border-right: 1px solid #aaa; border-left: 1px solid #999; }
.dtitle { display: flex; align-items: center; flex: none; gap: 2px; height: 10px; padding: 0 1px 0 5px; background: linear-gradient(#e2e2e2, #bdbdbd); border: 1px solid #999; border-top-color: #fff; font-weight: bold; color: #333; }
.dtitle b { width: 7px; font: bold 6px/8px "DejaVu Sans", sans-serif; text-align: center; color: #111; }
.valid { display: flex; align-items: center; justify-content: space-between; height: 11px; padding: 0 2px 0 1px; background: #f4f4f4; }
.valid label { display: flex; align-items: center; gap: 2px; }
.ck { appearance: none; position: relative; width: 7px; height: 7px; background: #e9e9e9; border-right: 1px solid #aaa; border-bottom: 1px solid #888; flex: none; display: block; }
.ck:checked::after { content: ""; position: absolute; inset: 0; background: #d90d12; clip-path: polygon(0 45%, 22% 30%, 42% 55%, 85% 0, 100% 15%, 45% 100%); }
.filter { display: flex; height: 11px; align-items: stretch; background: #fff; }
.filter input { flex: 1; }
.filter input::placeholder { color: #bbb; }
.cur { height: 11px; flex: none; }
.sw { width: 9px; border: 1px solid #d400d4; background: repeating-conic-gradient(#60006c 0 25%, #170019 0 50%) 0 0 / 4px 4px; flex: none; }
.avnv { display: grid; grid-template-columns: repeat(4, 1fr); height: 11px; flex: none; }
.names { height: 29px; flex: none; background: #fff; border: 1px solid #aaa; margin-bottom: 3px; }
.thead, .all { display: flex; height: 9px; text-align: center; }
.thead { background: linear-gradient(#d0d0d0, #a5a5a5); color: #222; }
.thead span { width: 17px; border-left: 1px solid #888; }
.all { gap: 1px; margin-top: 1px; }
.all .grow { background: #8c8c8c; color: #eee; }
.all button { width: 8px; height: 8px; background: #eee; border: 1px solid #bbb; line-height: 5px; }
.list { display: flex; flex: 1; min-height: 0; overflow: hidden; background: #fff; border-top: 1px solid #777; margin-bottom: 3px; }
table { border-collapse: collapse; border-spacing: 0; flex: 1; }
.layers { display: block; min-width: 0; }
.layers tr { display: grid; grid-template-columns: 9px 37px 14px 11px 11px; align-items: center; }
.layers tbody { display: grid; grid-auto-rows: 1fr; height: 265px; }
td, th { padding: 0; font-weight: 400; line-height: 9px; text-align: left; }
th { height: 9px; background: linear-gradient(#c9c9c9, #a0a0a0); color: #333; text-align: center; border-right: 1px solid #909090; }
.layers td:nth-child(2) { padding-left: 1px; white-space: nowrap; }
.layers td:nth-child(4), .layers td:nth-child(5) { padding-left: 2px; }
.layers tr.cur { height: auto; outline: 1px solid #444; outline-offset: -1px; }
.chip { width: 8px; height: 8px; border: 1px solid var(--edge); background: repeating-conic-gradient(var(--a) 0 25%, var(--b) 0 50%) 0 0 / 2px 2px; }
.vbar { display: flex; flex-direction: column; width: 9px; background: #999; flex: none; }
.vbar .up, .vbar .down { height: 9px; background: #e4e4e4; border: 1px solid #bbb; }
.vbar .thumb { flex: 2; background: #c5c5c5; border: 1px solid #999; border-radius: 2px 2px 5px 5px; }
.vbar .track { flex: 1; }
.objs { display: flex; flex: none; height: 39px; background: #fff; border-bottom: 1px solid #555; }
.objs table { height: 38px; }
.objs th:first-child { width: 60px; font-weight: bold; }
.objs td:first-child { padding-left: 12px; background: linear-gradient(#aaa, #aaa) 6px 4px / 4px 1px no-repeat, linear-gradient(#bbb, #bbb) 5px 0 / 1px 100% no-repeat; }
.objs td + td { padding-left: 2px; }
.dtabs { display: flex; gap: 4px; height: 13px; flex: none; padding-bottom: 2px; }
.dtabs button { flex: 1; max-width: 41px; height: 10px; background: #bdbdbd; border: 1px solid #888; border-radius: 0 0 3px 3px; border-top: 0; }
.dtabs .cur { background: #f3f3f3; }

.view { display: grid; flex: 1; min-width: 0; grid-template-columns: minmax(0, 1fr) 14px; grid-template-rows: minmax(0, 1fr) 14px; margin-left: 3px; padding: 0 0 0 2px; border-top: 1px solid #b55; border-bottom: 1px solid #555; border-left: 1px solid #777; background: #eee; }
.canvas { width: 100%; height: 100%; padding-top: 2px; background: #e4c9c9; }
.vscroll, .hscroll { display: flex; gap: 1px; }
.vscroll { flex-direction: column; padding: 2px 2px 0; }
.hscroll { padding: 2px 0; }
.end { width: 10px; height: 9px; flex: none; background: #e2e2e2; border: 1px solid #bbb; }
.bar-thumb { flex: 1; background: #bcbcbc; border: 1px solid #aaa; border-radius: 3px; }
.hscroll > i { height: 9px; }

.strip { display: flex; align-items: center; height: 16px; padding: 0 5px; background: linear-gradient(#e2e2e2, #bebebe); border-bottom: 1px solid #999; }
.mouse { display: grid; grid-template-columns: 1fr auto 1fr; height: 12px; line-height: 12px; padding: 0 5px 0 8px; background: linear-gradient(#ddd, #bcbcbc); color: #555; }
.mouse span:last-child { text-align: right; }
.cmd { display: flex; align-items: center; height: 11px; gap: 7px; background: #f2f2f2; color: #555; padding-right: 8px; }
.pink { width: 31px; background: #f6cccc; color: #a44; line-height: 11px; }
.cmdr { border-left: 1px solid #888; padding-left: 4px; }
.tasks { display: flex; align-items: center; height: 15px; padding: 0 6px 0 7px; gap: 2px; background: #e9e5dd; border-top: 1px solid #556; font: 7px/10px "DejaVu Sans", sans-serif; color: #222; }
.pager { display: grid; grid-template-columns: repeat(5, 15px); gap: 2px; margin-right: 2px; }
.pager i { height: 11px; background: #b2a692; }
.pager .now { background: #87bdf0; padding: 0 3px; }
.tasks > .gsep { margin: 0 1px; }
.tasklist { display: grid; flex: 1; min-width: 0; grid-template-columns: repeat(9, minmax(0, 1fr)); gap: 2px; }
.tasklist button { display: flex; align-items: center; gap: 3px; height: 12px; padding: 0 3px; overflow: hidden; background: #f1eee8; border: 1px solid #aaa294; border-radius: 2px; }
.tasklist .down { background: #dbd1c5; }
.tasklist svg { width: 9px; height: 9px; }

.status { display: flex; align-items: center; height: 13px; gap: 3px; padding-right: 12px; background: #e5e6e8; color: #000; }
.dev { position: relative; width: 9px; height: 10px; color: #777; }
.dev svg { width: 10px; height: 10px; }
.dev.off { color: #bbb; }
.dev.live::after { content: ""; position: absolute; right: -1px; bottom: 0; width: 4px; height: 4px; border-radius: 50%; background: #5bc413; }
.status .vsep { margin: 0 2px; height: 11px; }
.gauge { position: absolute; right: 0; bottom: 2px; width: 6px; height: 36px; background: #39455c; border: 1px solid #2a3348; display: flex; align-items: flex-end; }
.gauge i { width: 100%; height: 12px; background: #57a992; border-top: 2px solid #7fd64a; }
.mark { position: absolute; left: 409px; bottom: 8px; display: flex; align-items: center; gap: 4px; color: #fff; opacity: .84; font: 28px/26px "Liberation Sans", sans-serif; text-shadow: 1px 1px 2px #555; pointer-events: none; }
.mark svg { width: 34px; height: 28px; filter: drop-shadow(1px 1px 1px #666); }
```

FILE: layers.js
```js
// name, purpose, edge colour, fill colours
const layers = [
  ["pwell", "drw", "#c60", "#a50", "#000"],
  ["nwell", "drw", "#0a5", "#063", "#000"],
  ["active", "drw", "#0a5", "#0b6", "#084"],
  ["nactive", "drw", "#0a5", "#0b6", "#084"],
  ["pactive", "drw", "#c60", "#e70", "#930"],
  ["nselect", "drw", "#073", "#000", "#000"],
  ["pselect", "drw", "#c60", "#000", "#000"],
  ["poly", "drw", "#b00", "#b00", "#800"],
  ["elec", "drw", "#aa0", "#ee2", "#660"],
  ["metal1", "drw", "#00d", "#00c", "#004"],
  ["metal2", "drw", "#c0c", "#606", "#000"],
  ["metal3", "drw", "#0bb", "#0aa", "#000"],
  ["cc", "drw", "#222", "#000", "#000"],
  ["via", "drw", "#c0c", "#d0d", "#808"],
  ["via2", "drw", "#08c", "#2ad", "#168"],
  ["glass", "drw", "#555", "#556", "#000"],
  ["highres", "drw", "#00d", "#11e", "#003"],
  ["nodrc", "drw", "#077", "#099", "#000"],
  ["nolpe", "drw", "#222", "#888", "#000"],
  ["pad", "drw", "#660", "#cc0", "#000"],
  ["text", "drw", "#444", "#000", "#000"],
  ["res_id", "drw", "#222", "#778", "#000"],
  ["cap_id", "drw", "#222", "#778", "#000"],
  ["dio_id", "drw", "#222", "#778", "#000"],
  ["pwell", "net", "#c60", "#000", "#000"],
  ["nwell", "net", "#0a5", "#000", "#000"],
  ["active", "net", "#0a5", "#000", "#000"],
  ["nactive", "net", "#0a5", "#000", "#000"],
  ["pactive", "net", "#c60", "#000", "#000"]
];

const check = (label) => `<td><input class="ck" type="checkbox" checked aria-label="${label}"></td>`;

document.getElementById("layers").innerHTML = layers.map(([name, purpose, edge, a, b]) =>
  `<tr${name === "metal2" ? ' class="cur"' : ""}>
    <td><i class="chip" style="--edge:${edge};--a:${a};--b:${b}"></i></td>
    <td>${name}</td><td>${purpose}</td>${check(name + " visible")}${check(name + " selectable")}
  </tr>`).join("");
```
